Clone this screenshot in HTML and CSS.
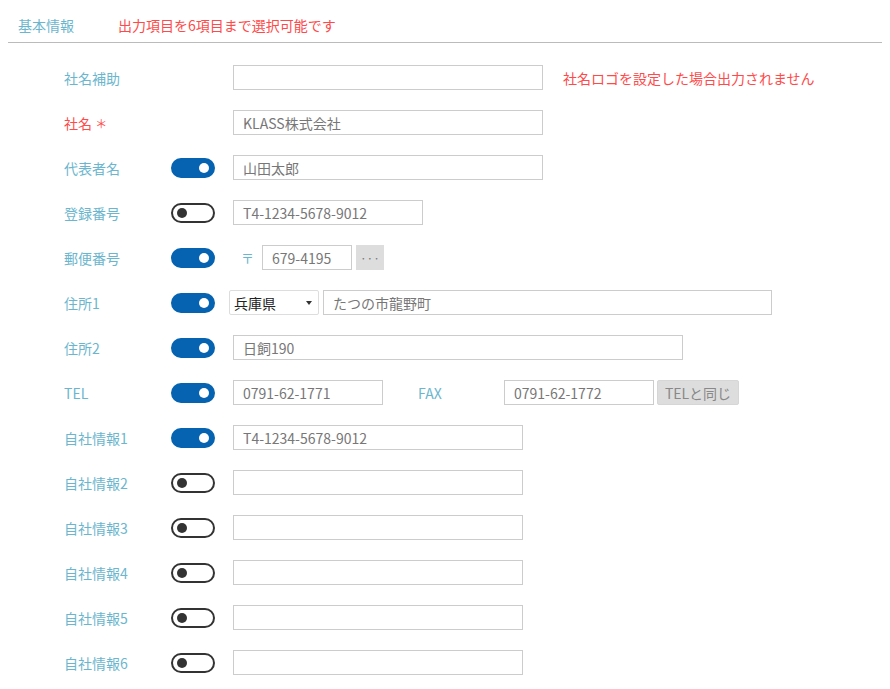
FILE: index.html
```html
<!DOCTYPE html>
<html lang="ja">

<head>
	<meta charset="UTF-8">
	<title>基本情報</title>

	<link rel="stylesheet" href="styles.css">
</head>

<body>
	<div class="tab-head">
		<span class="tab-title">基本情報</span>
		<span class="tab-note">出力項目を6項目まで選択可能です</span>
	</div>

	<div class="form">
		<div class="row">
			<label class="label">社名補助</label>
			<span class="switch-cell"></span>
			<div class="field">
				<input class="text w310" type="text" value="">
				<span class="note">社名ロゴを設定した場合出力されません</span>
			</div>
		</div>

		<div class="row">
			<label class="label required">社名 <span class="star">＊</span></label>
			<span class="switch-cell"></span>
			<div class="field">
				<input class="text w310" type="text" value="KLASS株式会社">
			</div>
		</div>

		<div class="row">
			<label class="label">代表者名</label>
			<span class="switch-cell"><span class="switch on"></span></span>
			<div class="field">
				<input class="text w310" type="text" value="山田太郎">
			</div>
		</div>

		<div class="row">
			<label class="label">登録番号</label>
			<span class="switch-cell"><span class="switch"></span></span>
			<div class="field">
				<input class="text w190" type="text" value="T4-1234-5678-9012">
			</div>
		</div>

		<div class="row">
			<label class="label">郵便番号</label>
			<span class="switch-cell"><span class="switch on"></span></span>
			<div class="field">
				<span class="zip-mark">〒</span>
				<input class="text w90" type="text" value="679-4195">
				<button class="btn-dots" type="button">···</button>
			</div>
		</div>

		<div class="row">
			<label class="label">住所1</label>
			<span class="switch-cell"><span class="switch on"></span></span>
			<div class="field">
				<span class="select">兵庫県</span>
				<input class="text w449" type="text" value="たつの市龍野町">
			</div>
		</div>

		<div class="row">
			<label class="label">住所2</label>
			<span class="switch-cell"><span class="switch on"></span></span>
			<div class="field">
				<input class="text w450" type="text" value="日飼190">
			</div>
		</div>

		<div class="row">
			<label class="label">TEL</label>
			<span class="switch-cell"><span class="switch on"></span></span>
			<div class="field">
				<input class="text w150" type="text" value="0791-62-1771">
				<span class="fax-label">FAX</span>
				<input class="text w150" type="text" value="0791-62-1772">
				<button class="btn-same" type="button">TELと同じ</button>
			</div>
		</div>

		<div class="row">
			<label class="label">自社情報1</label>
			<span class="switch-cell"><span class="switch on"></span></span>
			<div class="field">
				<input class="text w290" type="text" value="T4-1234-5678-9012">
			</div>
		</div>

		<div class="row">
			<label class="label">自社情報2</label>
			<span class="switch-cell"><span class="switch"></span></span>
			<div class="field">
				<input class="text w290" type="text" value="">
			</div>
		</div>

		<div class="row">
			<label class="label">自社情報3</label>
			<span class="switch-cell"><span class="switch"></span></span>
			<div class="field">
				<input class="text w290" type="text" value="">
			</div>
		</div>

		<div class="row">
			<label class="label">自社情報4</label>
			<span class="switch-cell"><span class="switch"></span></span>
			<div class="field">
				<input class="text w290" type="text" value="">
			</div>
		</div>

		<div class="row">
			<label class="label">自社情報5</label>
			<span class="switch-cell"><span class="switch"></span></span>
			<div class="field">
				<input class="text w290" type="text" value="">
			</div>
		</div>

		<div class="row">
			<label class="label">自社情報6</label>
			<span class="switch-cell"><span class="switch"></span></span>
			<div class="field">
				<input class="text w290" type="text" value="">
			</div>
		</div>
	</div>
</body>

</html>
```

FILE: styles.css
```css
html {
	font-family: "Noto Sans CJK JP", "Noto Sans", sans-serif;
	font-size: 14px;
}

body {
	margin: 8px;
	background-color: #FFF;
}

/* cabecera de la pestaña */
.tab-head {
	display: flex;
	align-items: center;
	height: 34px;
	padding-left: 10px;
	border-bottom: 1px solid #BBB;
}

.tab-title {
	color: #6BB6CE;
	width: 100px;
}

.tab-note {
	color: #FF4A4A;
}

.form {
	padding-top: 12px;
}

.row {
	display: flex;
	align-items: center;
	height: 45px;
	padding-left: 56px;
}

.label {
	flex-shrink: 0;
	width: 107px;
	color: #6BB6CE;
}

.label.required {
	color: #FF4A4A;
}

.star {
	font-size: 12px;
}

.switch-cell {
	flex-shrink: 0;
	width: 62px;
	display: flex;
	align-items: center;
}

/* interruptor */
.switch {
	position: relative;
	box-sizing: border-box;
	width: 44px;
	height: 20px;
	border: 2px solid #333;
	border-radius: 10px;
	background-color: #FFF;
}

.switch::after {
	content: "";
	position: absolute;
	top: 3px;
	left: 4px;
	width: 10px;
	height: 10px;
	border-radius: 50%;
	background-color: #333;
}

.switch.on {
	border-color: #0563B1;
	background-color: #0563B1;
}

.switch.on::after {
	left: auto;
	right: 4px;
	background-color: #FFF;
}

.field {
	display: flex;
	align-items: center;
}

.text {
	flex-shrink: 0;
	box-sizing: border-box;
	height: 25px;
	margin: 0;
	padding: 0 9px;
	font-family: inherit;
	font-size: 14px;
	color: #777;
	border: 1px solid #CCC;
	background-color: #FFF;
	outline: none;
}

.w90 { width: 90px; }
.w150 { width: 150px; }
.w190 { width: 190px; }
.w290 { width: 290px; }
.w310 { width: 310px; }
.w449 { width: 449px; }
.w450 { width: 450px; }

.note {
	margin-left: 20px;
	color: #FF4A4A;
}

.zip-mark {
	width: 13px;
	margin: 0 8px 0 8px;
	font-size: 13px;
	color: #6BB6CE;
}

.btn-dots {
	box-sizing: border-box;
	width: 28px;
	height: 25px;
	margin-left: 4px;
	padding: 0;
	font-family: inherit;
	font-size: 12px;
	color: #777;
	border: 1px solid #DDD;
	background-color: #DDD;
}

.select {
	position: relative;
	box-sizing: border-box;
	display: flex;
	align-items: center;
	width: 90px;
	height: 25px;
	margin-left: -4px;
	margin-right: 4px;
	padding-left: 4px;
	color: #222;
	border: 1px solid #DDD;
	border-radius: 2px;
}

.select::after {
	content: "";
	position: absolute;
	right: 6px;
	top: 10px;
	border-left: 3px solid transparent;
	border-right: 3px solid transparent;
	border-top: 4px solid #333;
}

.fax-label {
	width: 121px;
	padding-left: 35px;
	box-sizing: border-box;
	color: #6BB6CE;
}

.btn-same {
	box-sizing: border-box;
	height: 25px;
	width: 82px;
	margin-left: 3px;
	padding: 0;
	font-family: inherit;
	font-size: 14px;
	color: #888;
	border: 1px solid #D6D6D6;
	border-radius: 2px;
	background-color: #DDD;
}
```
